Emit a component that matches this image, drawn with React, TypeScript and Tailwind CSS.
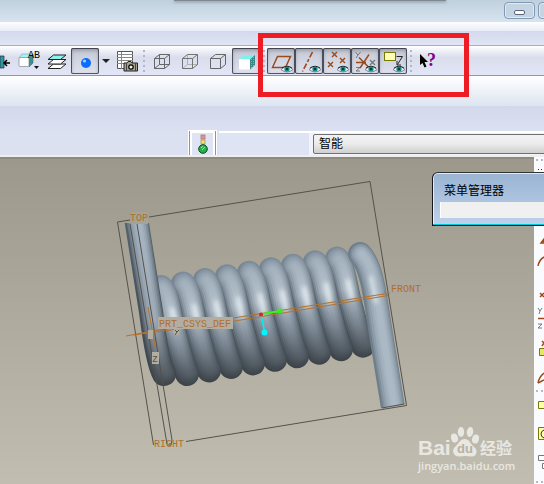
import React from 'react';

type IconProps = { children: React.ReactNode };

const Icon = ({ children }: IconProps) => (
  <svg width="28" height="26" viewBox="0 0 28 26" fill="none" className="shrink-0" aria-hidden="true">
    {children}
  </svg>
);

const ToolButton = ({ label, pressed, children }: { label: string; pressed?: boolean; children: React.ReactNode }) => (
  <button
    type="button"
    aria-label={label}
    aria-pressed={pressed}
    className={`relative flex h-[26px] w-7 shrink-0 items-center justify-center rounded-xs ${
      pressed
        ? 'bg-linear-to-b from-[#c4c8d4] via-[#d2d6e3] to-[#dfe2ed] inset-ring inset-ring-[#555a68] inset-shadow-sm inset-shadow-black/30'
        : ''
    }`}
  >
    <Icon>{children}</Icon>
  </button>
);

const Grip = () => (
  <div className="flex w-[7px] shrink-0 flex-col items-center gap-[3px]">
    {[0, 1, 2, 3, 4].map(i => (
      <span key={i} className="h-0.5 w-0.5 bg-[#b3b6c4]" />
    ))}
  </div>
);

const Eye = () => (
  <g>
    <path d="M14 21.5 Q20 15.5 26 21.5 Q20 26.5 14 21.5Z" fill="#e9eef2" stroke="#6e7480" strokeWidth="0.8" />
    <path d="M15 20 Q20 16.5 25 20" stroke="#222" strokeWidth="1" />
    <circle cx="20" cy="21" r="2.6" fill="#0c8a8a" />
    <circle cx="20" cy="21" r="1" fill="#022" />
  </g>
);

const BROWN = '#9a4a1c';

const Cross = ({ x, y, color = BROWN }: { x: number; y: number; color?: string }) => (
  <path d={`M${x - 2} ${y - 2}l5 5M${x + 3} ${y - 2}l-5 5`} stroke={color} strokeWidth="1.4" />
);

const Toolbar = () => (
  <div role="toolbar" className="flex h-[31px] items-center overflow-hidden border-t border-b border-t-[#abadbb] border-b-[#9296a6] bg-linear-to-b from-white via-[#d9ddec] via-40% to-[#e2e6f6]">
    <button type="button" aria-label="Exit" className="h-[26px] w-[15px] shrink-0 overflow-hidden">
      <Icon>
        <path d="M0 8h4v12h-4z" fill="#2a9a94" stroke="#225" strokeWidth="0.7" />
        <path d="M10 15H4M7 12l-3 3 3 3" stroke="#000" strokeWidth="1.5" />
      </Icon>
    </button>
    <ToolButton label="Saved view list">
      <path d="M4 10l3-4h11l-4 4z" fill="#9ff4f4" stroke="#889" strokeWidth="0.5" />
      <path d="M14 10l4-4v9l-4 4z" fill="#3a8f90" stroke="#566" strokeWidth="0.6" />
      <rect x="4" y="9.5" width="10" height="9" rx="1" fill="#fff" stroke="#888" strokeWidth="0.7" />
      <text x="13" y="10" fontFamily="Liberation Mono, monospace" fontSize="10" fill="#000">AB</text>
      <path d="M19 18h5l-2.5 3z" fill="#111" />
    </ToolButton>
    <ToolButton label="Layers">
      <path d="M5 20.5l5.5-4.5H23l-5.5 4.5z" fill="#fff" stroke="#222" />
      <path d="M5 16l5.5-4.5H23L17.5 16z" fill="#fff" stroke="#222" />
      <path d="M5 11.5L10.5 7H23l-5.5 4.5z" fill="#8df2f0" stroke="#222" />
    </ToolButton>
    <ToolButton label="Shading" pressed>
      <circle cx="15" cy="15" r="5" fill="#0a6cff" />
      <circle cx="13.5" cy="13" r="1.6" fill="#9cd0ff" />
    </ToolButton>
    <button type="button" aria-label="More" className="flex h-[26px] w-[13px] shrink-0 items-center justify-center">
      <svg width="8" height="4" viewBox="0 0 8 4" aria-hidden="true">
        <path d="M0 0h8L4 4z" fill="#222" />
      </svg>
    </button>
    <ToolButton label="View manager">
      <path d="M5.5 3.5h15v17h-15z" fill="#fff" stroke="#555" />
      <path d="M5 6.5h16M5 9.5h16M5 12.5h16M5 15.5h16M9.5 4v17" stroke="#888" />
      <path d="M12 15h3l1-1.5h3l1 1.5h5.5v8H12z" fill="#a5a38e" stroke="#222" />
      <path d="M14.5 15v8M23.5 15v8" stroke="#444" />
      <circle cx="19" cy="19" r="2.2" fill="#eee" stroke="#000" strokeWidth="1.2" />
    </ToolButton>
    <Grip />
    <div className="flex shrink-0 pl-px">
      <ToolButton label="Wireframe">
        <path d="M6.5 10.5h10v10h-10zM11.5 6.5h10v10h-10zM6.5 10.5l5-4M16.5 10.5l5-4M6.5 20.5l5-4M16.5 20.5l5-4" stroke="#666" />
      </ToolButton>
      <ToolButton label="Hidden line">
        <path d="M11.5 7v9.5H22M6.5 20.5l5-4" stroke="#b1b1b1" />
        <path d="M6.5 10.5h10v10h-10zM6.5 10.5l5-4h10v10l-5 4M16.5 10.5l5-4" stroke="#737373" />
      </ToolButton>
      <ToolButton label="No hidden">
        <path d="M6.5 10.5h10v10h-10zM6.5 10.5l5-4h10v10l-5 4M16.5 10.5l5-4" stroke="#666" />
      </ToolButton>
      <ToolButton label="Shaded" pressed>
        <path d="M7 11.5L12 7h11l-5 4.5z" fill="#79f3ee" />
        <path d="M18 11.5L23 7v10l-5 4.5z" fill="#3c8788" />
        <path d="M19.5 11v9M21.5 9v9" stroke="#75b7b8" strokeDasharray="1 1" />
        <rect x="7" y="11" width="11" height="10.5" rx="1" fill="#fff" />
      </ToolButton>
    </div>
    <Grip />
    <ToolButton label="Plane display" pressed>
      <path d="M5.5 19.5l5-11h13l-5 11z" stroke={BROWN} strokeWidth="1.5" />
      <Eye />
    </ToolButton>
    <ToolButton label="Axis display" pressed>
      <path d="M17.5 4L7.5 23.5" stroke={BROWN} strokeWidth="1.6" strokeDasharray="6 2 3 2" />
      <Eye />
    </ToolButton>
    <ToolButton label="Point display" pressed>
      <Cross x={11} y={6} />
      <Cross x={19} y={12} />
      <Cross x={7} y={16} />
      <Eye />
    </ToolButton>
    <ToolButton label="Csys display" pressed>
      <path d="M4.5 4l2.5 3 2.5-3M7 7l-2 3M5 19.5h4l-4 3.5h4" stroke="#777" />
      <path d="M5 14.5h10M18 6.5L9 20M8 9.5l10 10" stroke={BROWN} strokeWidth="1.5" />
      <Cross x={21} y={14} color="#777" />
      <Eye />
    </ToolButton>
    <ToolButton label="Annotation display" pressed>
      <rect x="5.5" y="4.5" width="11" height="8" fill="#ffffb4" stroke="#77770a" />
      <path d="M17.5 8.5h6l-5 8M18 13v4h4" stroke="#222" />
      <Eye />
    </ToolButton>
    <Grip />
    <ToolButton label="Context help">
      <path d="M6 6v11l2.5-2 2 4.5 2-1-2-4.5h3.5z" fill="#000" />
      <text x="13" y="18" fontFamily="Liberation Serif, serif" fontSize="18" fontWeight="bold" fill="#850085">?</text>
    </ToolButton>
  </div>
);

const COIL = 'M0 12C7 19 9 42 13 56S21 89 26 99';

// widths and opacities build up the round shading of a tube
const layers = [
  { width: 21, opacity: 0.25 },
  { width: 18, opacity: 0.3 },
  { width: 14, opacity: 0.35 },
  { width: 10, opacity: 0.35 },
  { width: 6, opacity: 0.4 },
];

const Tube = ({ d, edge, body }: { d: string; edge: string; body: string }) => (
  <g fill="none" strokeLinecap="round">
    <path d={d} stroke={edge} strokeWidth="24" />
    {layers.map((l, i) => (
      <path key={l.width} d={d} stroke={body} strokeWidth={l.width} strokeOpacity={l.opacity} transform={`translate(${0.8 + i * 0.25} 0)`} />
    ))}
  </g>
);

const coils = [8, 7, 6, 5, 4, 3, 2, 1, 0];

const SpringModel = () => (
  <svg width="534" height="325" viewBox="0 159 534 325" className="block max-w-none" role="img" aria-label="Spring">
    <defs>
      <linearGradient id="edge" gradientUnits="userSpaceOnUse" x1="0" y1="0" x2="0" y2="110">
        <stop offset="0" stopColor="#7c8b98" />
        <stop offset="0.5" stopColor="#53606b" />
        <stop offset="1" stopColor="#3c4349" />
      </linearGradient>
      <linearGradient id="body" gradientUnits="userSpaceOnUse" x1="0" y1="0" x2="0" y2="110">
        <stop offset="0" stopColor="#a0afbc" />
        <stop offset="0.38" stopColor="#c6d2dc" />
        <stop offset="0.65" stopColor="#8a97a3" />
        <stop offset="1" stopColor="#454c53" />
      </linearGradient>
      <linearGradient id="legEdge" gradientUnits="userSpaceOnUse" x1="0" y1="220" x2="0" y2="386">
        <stop offset="0" stopColor="#56636f" />
        <stop offset="1" stopColor="#3c4349" />
      </linearGradient>
      <linearGradient id="legBody" gradientUnits="userSpaceOnUse" x1="0" y1="220" x2="0" y2="386">
        <stop offset="0" stopColor="#b3c2cf" />
        <stop offset="0.6" stopColor="#aab8c5" />
        <stop offset="1" stopColor="#454c53" />
      </linearGradient>
      <filter id="soft" x="-200%" y="-50%" width="500%" height="200%">
        <feGaussianBlur stdDeviation="2" />
      </filter>
      <clipPath id="leftClip">
        <path d="M100 223h100v180H100z" />
      </clipPath>
      <clipPath id="rightClip">
        <path d="M340 230h80v172l-38 6h-42z" />
      </clipPath>
    </defs>

    {coils.map(i => (
      <g key={i} transform={`translate(${161 + i * 22} ${275 - i * 3.55})`}>
        <Tube d={COIL} edge="url(#edge)" body="url(#body)" />
        <path d="M11 34L15 52" stroke="#f3f8fb" strokeWidth="3" strokeLinecap="round" filter="url(#soft)" />
      </g>
    ))}
    <g clipPath="url(#rightClip)">
      <Tube d="M360 254C373 267 376 305 380 328L395 420" edge="#6f7e8b" body="#b4c2ce" />
      <path d="M371 277L376 302" stroke="#e8f0f5" strokeWidth="3" strokeLinecap="round" filter="url(#soft)" />
    </g>
    <g clipPath="url(#leftClip)">
      <Tube d="M134 205L151 312C154 336 158 364 164 374" edge="url(#legEdge)" body="url(#legBody)" />
    </g>

    <g fill="none" stroke="#55514d" strokeWidth="1">
      <path d="M130 220L117.500 222 153.500 445M149 217L370 181.500 406.500 405.500 186 441.500M382 408L404 404" />
      <path d="M130 224L167 444M137 224L172 440 171 445 167 445" />
    </g>
    <g fill="none" stroke="#b5722c" strokeWidth="1">
      <path d="M126 336L158 330 390 293M133 335L178 329M232 321.500L388 295.500 384 291M148 307L156 350" />
    </g>
    <path d="M261 315L264.500 331" stroke="#00f0f0" strokeWidth="1.500" />
    <path d="M262 314L280 311" stroke="#39f31e" strokeWidth="2" />
    <circle cx="261" cy="314.500" r="2" fill="#e3173e" />
    <circle cx="280" cy="311" r="2.500" fill="#2df51c" />
    <circle cx="264.500" cy="332.500" r="3" fill="#00f7ff" />

    <g fill="#b1aea1">
      <path d="M158 317h75v12h-75zM152 352h7v12h-7zM148 330h5v9h-5zM174 329h5v6h-5z" />
      <path d="M131 212h17v12h-17z" fill="#a5a296" />
    </g>
    <g fontFamily="Liberation Mono, monospace" fontSize="10" fill="#b06f2b">
      <text x="130" y="221">TOP</text>
      <text x="159" y="327">PRT_CSYS_DEF</text>
      <text x="391" y="292">FRONT</text>
      <text x="154" y="447">RIGHT</text>
      <text x="152" y="362" fill="#55514d">z</text>
    </g>
    <path d="M175 330l2 2 2-2M177 332l-2 3" stroke="#55514d" fill="none" />
  </svg>
);

const Watermark = () => (
  <div className="absolute right-[18px] bottom-3 w-[98px] text-[#e9e7e1]">
    <svg width="98" height="34" viewBox="0 0 98 34" aria-hidden="true">
      <g fill="#e9e7e1">
        <ellipse cx="36.5" cy="12" rx="3.4" ry="4.600" transform="rotate(-15 36.5 12)" />
        <ellipse cx="43" cy="6" rx="3.200" ry="5" />
        <ellipse cx="52" cy="6" rx="3.200" ry="5" transform="rotate(8 52 6)" />
        <ellipse cx="57.5" cy="13" rx="3.400" ry="4.600" transform="rotate(15 57.5 13)" />
        <path d="M47 13c-5 0-6 4-9 7-3 2-3.5 5-2.500 7 2 5 7 3 11.500 3s9 2 11-2c2-4-1-6-3-8-3-3-4-7-8-7z" />
        <text x="0" y="29" fontFamily="Liberation Sans, sans-serif" fontWeight="bold" fontSize="21">Bai</text>
        <text x="62" y="28" fontFamily="Noto Sans CJK SC, sans-serif" fontWeight="bold" fontSize="16">经验</text>
      </g>
      <text x="39" y="27" fontFamily="Liberation Sans, sans-serif" fontWeight="bold" fontSize="13" fill="#b5b2a6">du</text>
    </svg>
    <div className="font-['Open_Sans',sans-serif] text-[11px] leading-3 font-semibold whitespace-nowrap">jingyan.baidu.com</div>
  </div>
);

const MenuManager = () => (
  <section className="absolute top-[15px] -right-3 flex h-[54px] w-[124px] flex-col rounded-tl-md border border-[#161616] border-t-[#333] bg-linear-to-b from-[#9ab4d2] to-[#bdd2ec] pl-[7px] inset-ring inset-ring-white/70">
    <h2 className="h-[29px] pt-2 pl-1 text-[12px] leading-5 text-black">菜单管理器</h2>
    <div className="h-4 border-l border-white bg-[#f0f0f0]" />
    <div className="mt-auto -ml-[7px] h-px bg-[#00c8dc]" />
  </section>
);

const SideToolbar = () => (
  <aside className="w-[10px] shrink-0 overflow-hidden bg-[#fafbff]">
    <svg width="10" height="327" viewBox="534 157 10 327" fill="none" aria-hidden="true">
      <path d="M536 160h8M536 391h8M536 482h8" stroke="#b8b8c0" strokeWidth="2" strokeDasharray="2 3" />
      <path d="M538 169.500h6" stroke="#225" strokeDasharray="1 2" />
      <path d="M541 243l3-4v4zM538 266q1-6 6-9M540 293l4 4M544 293l-4 4M538 318.500h6M542 341l2 2-2 3M538 383q1-6 6-10M538 383l6-3" stroke={BROWN} strokeWidth="1.500" />
      <path d="M538 308l2 3 2-3M540 311l-1 3M538 324h4l-4 4h4" stroke="#777" />
      <path d="M539.500 348.500h6v7h-6z" fill="#e9e565" stroke="#77770a" />
      <path d="M538.500 401.500h8v7h-8zM538.500 427.500h8v12h-8z" fill="#ffffa8" stroke="#77770a" />
      <path d="M544 430q-3 1-3 4t3 4" stroke="#333" />
      <path d="M538.500 455.500h8v5h-8zM542.500 463.500h4v5h-4z" fill="#fff" stroke="#777" />
    </svg>
  </aside>
);

const TitleBar = () => (
  <header className="relative flex h-[22px] items-start justify-end gap-[3px] bg-linear-to-b from-[#c0d0dd] to-[#d7e4f0] pt-0.5">
    <div className="absolute top-0 left-[32%] h-px w-1/2 bg-[#7f8890] shadow-[0_1px_3px_#5f6870]" />
    <button type="button" aria-label="Minimize" className="flex h-[17px] w-[31px] items-center justify-center rounded-sm border border-[#8299b4] bg-[#c5d4e3] pt-1 inset-ring inset-ring-white/50">
      <span className="h-[5px] w-[11px] rounded-xs border border-[#5d6674] bg-white" />
    </button>
    <button type="button" aria-label="Maximize" className="-mr-2 h-[17px] w-[14px] rounded-l-sm border border-[#8299b4] bg-[#c5d4e3] inset-ring inset-ring-white/50" />
  </header>
);

const StatusBar = () => (
  <div className="flex h-6 items-stretch">
    <div className="w-[35%] max-w-[189px] shrink-0" />
    <div className="flex w-[27px] shrink-0 border-x border-[#8f929c] bg-[#dfe3f3] ring-1 ring-white">
      <div className="flex flex-1 items-center justify-center border-x-2 border-t-2 border-white">
        <svg width="12" height="20" viewBox="0 0 12 20" aria-hidden="true">
          <rect x="4" y="1" width="4" height="4" fill="#e59292" stroke="#a77" strokeWidth="0.8" />
          <rect x="4" y="6" width="4" height="4" fill="#f5e64e" stroke="#998" strokeWidth="0.8" />
          <circle cx="6" cy="15" r="4.3" fill="#27b04a" stroke="#064d18" />
          <path d="M4 14l2-2M5 16l3-3" stroke="#9fe8ac" />
        </svg>
      </div>
    </div>
    <div className="ml-[3px] w-[90px] shrink-0 border-t-2 border-white bg-[#dfe4f4]" />
    <div className="flex flex-1 items-center border-t-2 border-white bg-[#f1f3f9] pl-1">
      <select
        aria-label="Selection filter"
        className="-mr-2 h-5 w-full flex-1 appearance-none rounded-xs border border-[#707070] bg-linear-to-b from-[#f3f3f3] via-[#ebebeb] to-[#cfcfcf] pl-[5px] text-[12px] leading-4 text-black"
      >
        <option>智能</option>
      </select>
    </div>
  </div>
);

export default function App() {
  return (
    <div className="relative flex min-h-screen flex-col overflow-hidden bg-[#dce1f1] font-['Liberation_Sans','Noto_Sans_CJK_SC',sans-serif]">
      <TitleBar />
      <div className="h-[9px] bg-linear-to-b from-white to-[#e8ecf5]" />
      <div className="h-[14px] bg-linear-to-b from-[#d3daec] to-[#e0e4f5]" />
      <div className="relative">
        <Toolbar />
        {/* highlight frame around the datum display buttons */}
        <div className="pointer-events-none absolute -top-3 left-[258px] h-16 w-[211px] border-5 border-[#ee1c25]" />
      </div>
      <div className="h-[30px] bg-linear-to-b from-white to-[#dde5f1]" />
      <div className="h-[25px] bg-linear-to-b from-[#d2d9eb] to-[#dce1f1]" />
      <StatusBar />
      <div className="h-0.5 bg-[#eeeeee]" />
      <main className="relative flex flex-1">
        <div className="relative min-w-0 flex-1 overflow-hidden border-t-2 border-[#8e8a7d] bg-linear-to-b from-[#9c998c] to-[#c1beb1]">
          <SpringModel />
          <Watermark />
        </div>
        <SideToolbar />
        <MenuManager />
      </main>
    </div>
  );
}
